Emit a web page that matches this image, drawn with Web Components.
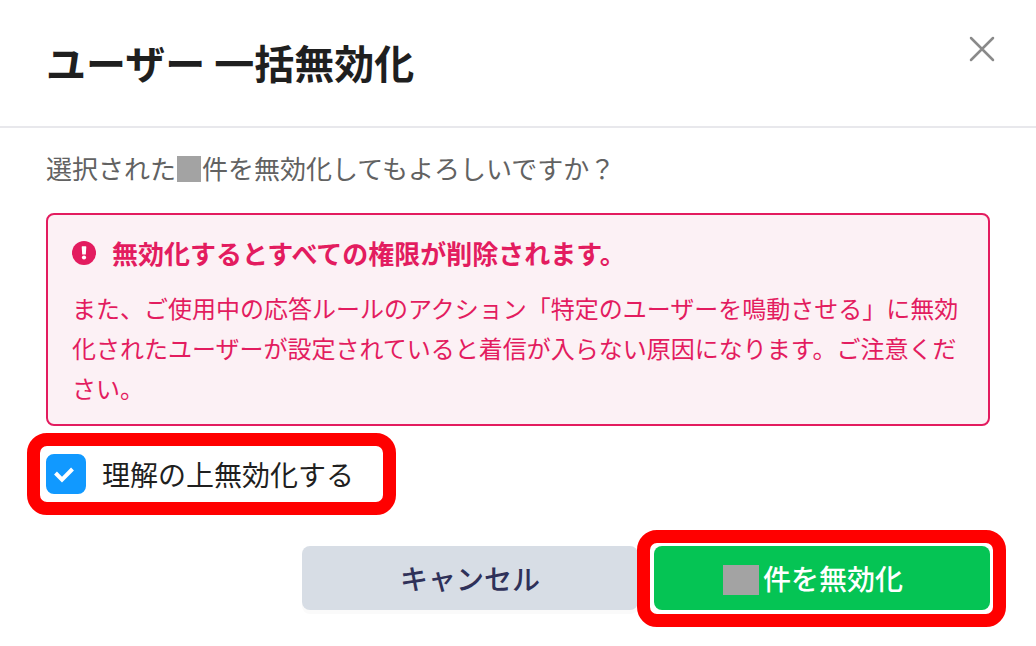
<!DOCTYPE html>
<html lang="ja">
<head>
<meta charset="utf-8">
<meta name="viewport" content="width=device-width, initial-scale=1">
<title>ユーザー 一括無効化</title>
<style>
  body { margin: 0; background: #fff; color: #1f1f1f; font-family: "Noto Sans CJK JP", sans-serif; }
</style>
</head>
<body>
<confirm-dialog>
  <span slot="title">ユーザー 一括無効化</span>
  <span slot="message">選択された<redacted-count></redacted-count>件を無効化してもよろしいですか？</span>
  <alert-box>
    <span slot="heading">無効化するとすべての権限が削除されます。</span>
    また、ご使用中の応答ルールのアクション「特定のユーザーを鳴動させる」に無効化されたユーザーが設定されていると着信が入らない原因になります。ご注意ください。
  </alert-box>
  <check-field>理解の上無効化する</check-field>
  <action-button slot="actions" variant="secondary">キャンセル</action-button>
  <action-button slot="actions" variant="primary"><redacted-count size="large"></redacted-count>件を無効化</action-button>
</confirm-dialog>

<script>
class BaseElement extends HTMLElement {
  connectedCallback() {
    if (this.shadowRoot) return;
    this.attachShadow({ mode: "open" }).innerHTML = this.constructor.markup;
  }
}

customElements.define("confirm-dialog", class extends BaseElement {
  static markup = `
    <style>
      :host { display: block; }
      header { display: flex; justify-content: space-between; align-items: flex-start; padding: 30px 36px 32px 46px; border-bottom: 2px solid #e8e8ec; }
      h1 { margin: 0; font-size: 40px; line-height: 64px; font-weight: 700; }
      .close { display: flex; margin: 2px 0 0; padding: 0; border: 0; background: none; cursor: pointer; }
      .body { padding: 20px 46px 36px; }
      p { margin: 0 0 25px; font-size: 26px; line-height: 40px; color: #626262; }
      footer { display: flex; justify-content: flex-end; gap: 16px; margin-top: 52px; }
    </style>
    <header>
      <h1><slot name="title"></slot></h1>
      <button class="close" type="button" aria-label="閉じる">
        <svg width="36" height="36" viewBox="0 0 36 36" fill="none" stroke="#8a8a8a" stroke-width="2.500" stroke-linecap="round"><path d="M7 6L29 28M29 6L7 28"/></svg>
      </button>
    </header>
    <div class="body">
      <p><slot name="message"></slot></p>
      <slot></slot>
      <footer><slot name="actions"></slot></footer>
    </div>`;
});

customElements.define("redacted-count", class extends BaseElement {
  static markup = `
    <style>
      :host { display: inline-block; width: 24px; height: 26px; margin: 0 1px; background: #a3a3a3; vertical-align: -3px; }
      :host([size="large"]) { width: 36px; height: 30px; margin: 0 4px 0 0; vertical-align: -5px; }
    </style>`;
});

customElements.define("alert-box", class extends BaseElement {
  static markup = `
    <style>
      :host { display: block; padding: 18px 24px 16px; border: 2px solid #e31c5f; border-radius: 8px; background: #fcf1f5; color: #e31c5f; }
      .heading { display: flex; align-items: center; gap: 16px; margin-bottom: 15px; font-size: 26px; line-height: 40px; font-weight: 700; }
      svg { flex: none; }
      .text { font-size: 24px; line-height: 40px; }
    </style>
    <div class="heading">
      <svg width="24" height="24" viewBox="0 0 24 24"><circle cx="12" cy="12" r="12" fill="#e31c5f"/><path d="M10.300 5.300h3.400a.6.6 0 0 1 .6.6l-.5 7.500h-3.600l-.5-7.500a.6.6 0 0 1 .6-.6z" fill="#fff"/><circle cx="12" cy="16.500" r="2.100" fill="#fff"/></svg>
      <slot name="heading"></slot>
    </div>
    <div class="text"><slot></slot></div>`;
});

customElements.define("check-field", class extends BaseElement {
  static markup = `
    <style>
      :host { display: flex; margin-top: 28px; }
      label { position: relative; display: flex; align-items: center; gap: 16px; font-size: 28px; line-height: 40px; cursor: pointer; }
      label::after { content: ""; position: absolute; inset: -21px -42px -21px -19px; border: 13px solid #f00; border-radius: 20px; pointer-events: none; }
      .box { display: grid; }
      .box > * { grid-area: 1 / 1; }
      input { appearance: none; width: 40px; height: 40px; margin: 0; border: 2px solid #c4c4c4; border-radius: 8px; }
      input:checked { border-color: #1199ff; background: #1199ff; }
      svg { visibility: hidden; pointer-events: none; }
      input:checked + svg { visibility: visible; }
    </style>
    <label>
      <span class="box">
        <input type="checkbox" checked>
        <svg width="40" height="40" viewBox="0 0 40 40" fill="none" stroke="#fff" stroke-width="4"><path d="M9.500 19L16 25.700L26.500 15"/></svg>
      </span>
      <span><slot></slot></span>
    </label>`;
});

customElements.define("action-button", class extends BaseElement {
  static markup = `
    <style>
      :host { display: block; position: relative; flex: 0 1 336px; }
      button { display: block; box-sizing: border-box; width: 100%; margin: 0; padding: 12px 16px; border: 0; border-radius: 8px; background: #d7dde5; color: #2f3159; box-shadow: 0 4px 0 #fafafa; font: 500 28px/40px "Noto Sans CJK JP", sans-serif; cursor: pointer; }
      :host([variant="primary"]) button { padding-right: 34px; background: #05c454; color: #fff; box-shadow: none; }
      :host([variant="primary"])::after { content: ""; position: absolute; inset: -16px -16px -17px -17px; border: 13px solid #f00; border-radius: 20px; pointer-events: none; }
    </style>
    <button type="button"><slot></slot></button>`;
});
</script>
</body>
</html>
